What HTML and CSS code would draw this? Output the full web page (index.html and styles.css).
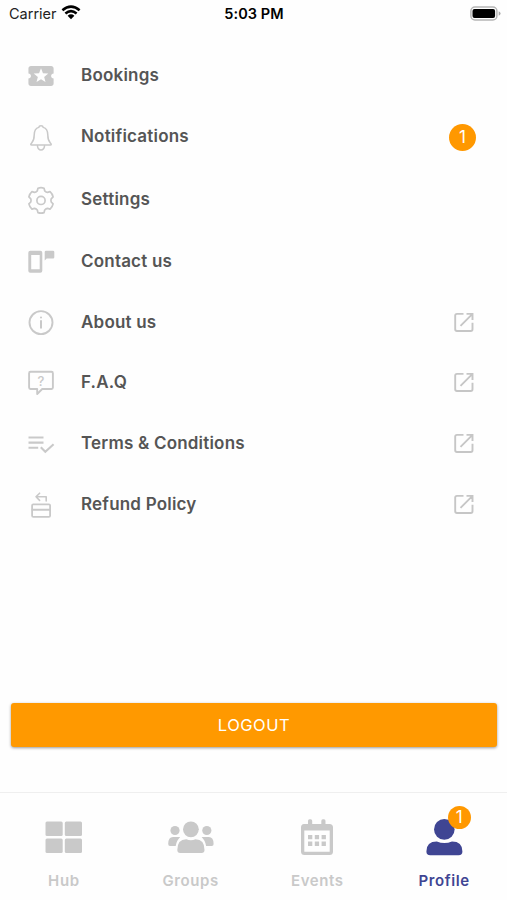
FILE: index.html
```html
<!DOCTYPE html>
<html lang="en">
<head>
<meta charset="utf-8">
<title>Profile</title>
<link rel="stylesheet" href="styles.css">
</head>
<body>
<svg width="0" height="0" class="defs">
  <symbol id="external" viewBox="0 0 30 30"><path d="M14.500 5.900H8Q6.200 5.900 6.200 7.600V21.300Q6.200 23 8 23H21.800Q23.500 23 23.500 21.300V14.800M11.500 17.800L23 6.300M17.500 5.900H23.500V11.900" fill="none" stroke="#c6c6c6" stroke-width="1.900"/></symbol>
</svg>
<header class="status">
  <div class="carrier">Carrier
    <svg width="20" height="15" viewBox="0 0 20 15"><g fill="none" stroke="#000" stroke-width="2.500"><path d="M1.400 5.300Q10-2 18.600 5.300M4.400 8.500Q10 3.700 15.600 8.500"/></g><path d="M6.600 10.700Q10 7.800 13.400 10.700L10 14.200Z"/></svg>
  </div>
  <div class="time">5:03 PM</div>
  <svg class="battery" width="31" height="16" viewBox="0 0 31 16"><rect x=".9" y="1" width="26" height="13" rx="4" fill="#fff" stroke="#b5b5b5" stroke-width="1.500"/><rect x="2.500" y="2.900" width="22.600" height="9.200" rx="2"/><path d="M28.700 5.300Q30.600 6 30.600 7.500T28.700 9.700Z" fill="#aaa"/></svg>
</header>
<main class="menu">
  <a class="row"><svg class="icon" viewBox="0 0 30 30"><path fill="#c9c9c9" transform="translate(-.1 -.1) scale(1.260)" d="M20 12c0-1.100.9-2 2-2V6c0-1.100-.9-2-2-2H4c-1.100 0-1.990.9-1.990 2v4c1.100 0 1.990.9 1.990 2s-.89 2-2 2v4c0 1.100.9 2 2 2h16c1.100 0 2-.9 2-2v-4c-1.100 0-2-.9-2-2zm-4.420 4.800L12 14.500l-3.580 2.300 1.080-4.120-3.290-2.690 4.240-.25L12 5.800l1.540 3.950 4.240.25-3.290 2.690 1.090 4.110z"/></svg><span class="label">Bookings</span></a>
  <a class="row"><svg class="icon line" viewBox="0 0 30 30"><path d="M15 2.700Q13 2.700 12.800 4.400C8.800 5.500 8.200 9 8.200 12C8.200 17.500 7.200 18.300 5.400 20.300Q4 22.100 5.700 22.100H24.300Q26 22.100 24.600 20.300C22.800 18.300 21.800 17.500 21.800 12C21.800 9 21.200 5.500 17.200 4.400Q17 2.700 15 2.700ZM11.500 23.200Q12 27 15 27T18.500 23.200"/></svg><span class="label raised">Notifications</span><span class="badge">1</span></a>
  <a class="row"><svg class="icon line" viewBox="0 0 30 30"><g transform="translate(15 14.400)"><path stroke-width="1.700" d="M-3.050-12.200Q0-13.200 3.050-12.200L3.700-9.600Q5 -8.200 6.500-8L9.060-8.750Q11.500-6.500 12.100-3.500L10.200-1.600Q9.700 0 10.200 1.600L12.100 3.500Q11.500 6.500 9.060 8.750L6.500 8Q5 8.200 3.700 9.600L3.050 12.200Q0 13.200-3.050 12.200L-3.700 9.600Q-5 8.200-6.500 8L-9.060 8.750Q-11.500 6.500-12.100 3.500L-10.200 1.600Q-9.700 0-10.200-1.600L-12.100-3.500Q-11.500-6.500-9.060-8.750L-6.500-8Q-5-8.200-3.700-9.600Z"/><circle r="4.100" stroke-width="1.700"/></g></svg><span class="label raised">Settings</span></a>
  <a class="row"><svg class="icon" viewBox="0 0 30 30"><path fill="#c9c9c9" fill-rule="evenodd" d="M4.300 3.700H14.300Q16.300 3.700 16.300 5.700V23.700Q16.300 25.700 14.300 25.700H4.300Q2.300 25.700 2.300 23.700V5.700Q2.300 3.700 4.300 3.700ZM5.200 8V22.200H13.700V8ZM20 3.700H27Q28.300 3.700 28.300 5V10.200Q28.300 11.500 27 11.500H20.700L18.700 13.600V5Q18.700 3.700 20 3.700Z"/></svg><span class="label">Contact us</span></a>
  <a class="row"><svg class="icon line" viewBox="0 0 30 30"><circle cx="15" cy="14.600" r="11.500" stroke-width="1.900"/><path stroke-width="2" d="M15 13V19.700M15 9.400V9.500"/></svg><span class="label">About us</span><svg class="ext"><use href="#external"/></svg></a>
  <a class="row"><svg class="icon line" viewBox="0 0 30 30"><path stroke-width="1.900" d="M4.500 3.800H25.500Q26.900 3.800 26.900 5.200V19.600Q26.900 21 25.500 21H16.200L11.200 26V21H4.500Q3.100 21 3.100 19.600V5.200Q3.100 3.800 4.500 3.800Z"/><text x="15" y="17.500" class="q">?</text></svg><span class="label">F.A.Q</span><svg class="ext"><use href="#external"/></svg></a>
  <a class="row"><svg class="icon" viewBox="0 0 30 30"><path fill="none" stroke="#c9c9c9" stroke-width="2.100" d="M2.500 8.500H17.500M2.500 13.600H17.500M2.500 18.700H12.200M14.800 18.300L19.300 22.800L27.600 15.200"/></svg><span class="label">Terms &amp; Conditions</span><svg class="ext"><use href="#external"/></svg></a>
  <a class="row"><svg class="icon line" viewBox="0 0 30 30"><rect x="6.100" y="14.400" width="18" height="12.500" rx="1.200" stroke-width="1.800"/><path stroke-width="2" d="M6.500 19.800H23.500"/><path stroke-width="1.600" d="M13.600 3.200L10 6.800L13.600 10.400M10 6.800H20.200V11"/></svg><span class="label">Refund Policy</span><svg class="ext"><use href="#external"/></svg></a>
</main>
<button class="logout">LOGOUT</button>
<nav class="tabs">
  <a class="tab"><svg viewBox="0 0 50 50"><g fill="#c9c9c9"><rect x="7.500" y="15.400" width="17.200" height="14.700" rx="1.500"/><rect x="26.800" y="15.400" width="17.200" height="14.700" rx="1.500"/><rect x="7.500" y="32.400" width="17.200" height="14.700" rx="1.500"/><rect x="26.800" y="32.400" width="17.200" height="14.700" rx="1.500"/></g></svg><span>Hub</span></a>
  <a class="tab"><svg viewBox="0 0 50 50"><g fill="#c9c9c9"><circle cx="25.900" cy="23.300" r="7.900"/><circle cx="10" cy="24.500" r="4.600"/><circle cx="41.800" cy="24.500" r="4.600"/><path d="M12.300 44Q12.300 33.300 21.300 33.300Q25.900 35.300 30.500 33.300Q39.500 33.300 39.500 44Q39.500 47 36.500 47H15.300Q12.300 47 12.300 44ZM3.200 38Q3.200 31 8 31H15.200Q11.500 34.500 10.700 40H5Q3.200 40 3.200 38ZM48.600 38Q48.600 31 43.800 31H36.600Q40.300 34.500 41.100 40H46.800Q48.600 40 48.600 38Z"/></g></svg><span>Groups</span></a>
  <a class="tab"><svg viewBox="0 0 50 50"><path fill="#c9c9c9" fill-rule="evenodd" d="M12 18H16V15Q16 13.300 17.500 13.300H18.700Q20.200 13.300 20.200 15V18H29.300V15Q29.300 13.300 30.800 13.300H32Q33.500 13.300 33.500 15V18H37.500Q41 18 41 21.500V45.500Q41 49 37.500 49H12.500Q9 49 9 45.500V21.500Q9 18 12 18ZM12.300 24.500V45.700H37.700V24.500ZM16 29V33.300H20.300V29ZM22.800 29V33.300H27.100V29ZM29.600 29V33.300H33.900V29ZM16 35.600V39.900H20.300V35.600ZM22.800 35.600V39.900H27.100V35.600ZM29.600 35.600V39.900H33.900V35.600Z"/></svg><span>Events</span></a>
  <a class="tab active"><svg viewBox="0 0 50 50"><g fill="#3f4593"><circle cx="25.300" cy="23.400" r="10.300"/><path d="M7.400 45.500Q7.400 35.600 17.800 35.600Q25.400 38.600 33 35.600Q43.400 35.600 43.400 45.500Q43.400 49.300 39.600 49.300H11.200Q7.400 49.300 7.400 45.500Z"/></g></svg><i class="badge small">1</i><span>Profile</span></a>
</nav>
</body>
</html>
```
FILE: styles.css
```css
* { box-sizing: border-box; }
body {
  margin: 0;
  height: 900px;
  overflow: hidden;
  display: flex;
  flex-direction: column;
  background: #fefefe;
  font-family: Inter, "Liberation Sans", sans-serif;
  color: #000;
}
.defs { display: none; }
.status {
  height: 28px;
  flex: none;
  padding: 0 6px 0 9px;
  display: grid;
  grid-template-columns: 1fr auto 1fr;
  align-items: center;
  font-size: 14.5px;
  line-height: 28px;
}
.carrier { display: flex; align-items: center; gap: 5px; color: #222; }
.carrier svg { margin: -3px 0 0 -1px; }
.time { font-weight: 600; letter-spacing: .1px; margin-left: -2px; }
.battery { justify-self: end; margin-top: -1px; }
.menu {
  flex: none;
  margin-top: 33px;
  height: 642px;
  padding: 0 28px 0 26px;
  display: grid;
  grid-template-rows: 62px 63px 61px 61px 60px 61px 61px 30px;
  align-content: start;
}
.row { height: 30px; display: flex; align-items: center; }
.icon { width: 30px; height: 30px; flex: none; }
.line { fill: none; stroke: #c9c9c9; stroke-width: 1.5; stroke-linejoin: round; stroke-linecap: round; }
.q { font-size: 13px; font-weight: 500; text-anchor: middle; fill: #c9c9c9; stroke: none; }
.label {
  flex: 1;
  padding: 0 0 2px 25px;
  font-size: 17px;
  font-weight: 600;
  line-height: 24px;
  letter-spacing: .2px;
  color: #555;
}
.raised { padding-bottom: 4px; }
.ext { width: 30px; height: 30px; margin-top: -1px; }
.badge {
  width: 27px;
  height: 27px;
  margin: -2px 3px 0 0;
  border-radius: 50%;
  background: #ff9800;
  color: #fff;
  font-size: 17px;
  font-style: normal;
  font-weight: 400;
  line-height: 27px;
  text-align: center;
}
.logout {
  flex: none;
  height: 44px;
  margin: 0 10px 0 11px;
  padding: 0;
  border: 0;
  border-radius: 3px;
  background: #ff9900;
  box-shadow: 0 1px 3px rgba(0, 0, 0, .4);
  color: #fff;
  font: 400 16.500px/44px Inter, "Liberation Sans", sans-serif;
  letter-spacing: .5px;
}
.tabs {
  flex: none;
  height: 108px;
  margin-top: 45px;
  padding-top: 13px;
  border-top: 1px solid #efefef;
  display: grid;
  grid-template-columns: repeat(4, 1fr);
}
.tab {
  position: relative;
  display: flex;
  flex-direction: column;
  align-items: center;
  gap: 15px;
  color: #c9c9c9;
  font-size: 15px;
  font-weight: 600;
  line-height: 20px;
  letter-spacing: .6px;
}
.tab span { padding-left: 1px; }
.tab svg { width: 50px; height: 50px; }
.active { color: #3f4593; }
.small {
  position: absolute;
  top: 0;
  left: calc(50% + 4px);
  width: 23px;
  height: 23px;
  margin: 0;
  line-height: 23px;
  letter-spacing: 0;
}
```
